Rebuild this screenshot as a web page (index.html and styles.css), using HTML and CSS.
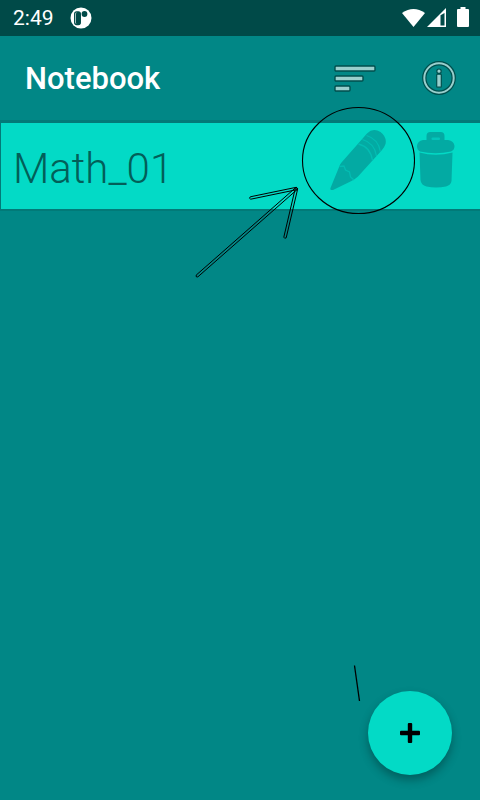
FILE: index.html
```
<!DOCTYPE html>
<html lang="en">
<head>
<meta charset="utf-8">
<meta name="viewport" content="width=device-width, initial-scale=1">
<title>Notebook</title>
<link rel="stylesheet" href="styles.css">
</head>
<body>
<div class="status">
  <span class="clock">2:49</span>
  <svg class="status-app" viewBox="0 0 22 22" width="22" height="22" aria-hidden="true">
    <circle cx="11" cy="11" r="10.500" fill="#fff"/>
    <rect x="4.700" y="4.800" width="5.600" height="12.800" rx="2" fill="#fff" stroke="#004a48" stroke-width="1.300"/>
    <rect x="6" y="5" width="4.300" height="12.500" rx="1.500" fill="#004a48"/>
    <circle cx="14.500" cy="7" r="2.900" fill="#004a48"/>
  </svg>
  <svg class="status-icons" viewBox="0 0 68 22" width="68" height="22" aria-hidden="true">
    <path d="M0 6Q11.500-2 23 6L11.500 20Z" fill="#fff"/>
    <path d="M44 1V20H25Z" fill="#fff"/>
    <path d="M38.500 8.200L42.500 6V18.500H38.500Z" fill="#004a48"/>
    <path d="M58.500 0H63.500V2H66Q67 2 67 3V19Q67 20 66 20H56Q55 20 55 19V3Q55 2 56 2H58.500Z" fill="#fff"/>
  </svg>
</div>
<header class="appbar">
  <h1>Notebook</h1>
  <button class="tool" aria-label="Sort">
    <svg viewBox="0 0 48 48" width="48" height="48" fill="#99cfcd" stroke="#004f4d" stroke-width="1.400">
      <rect x="4" y="12" width="40" height="5" rx="1"/>
      <rect x="4" y="22" width="28" height="5" rx="1"/>
      <rect x="4" y="32" width="15" height="5" rx="1"/>
    </svg>
  </button>
  <button class="tool" aria-label="Information">
    <svg viewBox="0 0 48 48" width="48" height="48" fill="none">
      <circle cx="24" cy="24" r="14.700" stroke="#004f4d" stroke-width="4.400"/>
      <circle cx="24" cy="24" r="14.700" stroke="#99cfcd" stroke-width="2"/>
      <circle cx="24" cy="17.200" r="2.200" fill="#99cfcd" stroke="#004f4d" stroke-width="1.200"/>
      <rect x="21.700" y="20.200" width="4.600" height="13" rx=".8" fill="#99cfcd" stroke="#004f4d" stroke-width="1.200"/>
    </svg>
  </button>
</header>
<main>
  <ul class="notes">
    <li class="note">
      <span class="name">Math_01</span>
      <button class="act edit" aria-label="Edit">
        <svg viewBox="0 0 60 64" width="60" height="64">
          <path d="M3.500 62Q2 62 2.500 60L11.500 38Q12 36 13.500 34.500L39 5.500Q45-.5 52.500 4Q59 9 57.500 16Q56.500 19 54 22L30 48.500Q26 52 23.500 53L5 62Z" fill="#03aaa3"/>
          <path d="M30.500 16Q42.500 19 44.500 32.500M34.500 11.500Q46.500 15 48.500 28M38.500 7.500Q50.500 11 52.500 24M11.500 38.500L16 38L17.500 42L21.500 44L22.500 49L26 52" fill="none" stroke="#03bdb3" stroke-width="1.300"/>
        </svg>
      </button>
      <button class="act trash" aria-label="Delete">
        <svg viewBox="0 0 40 64" width="40" height="64" fill="#03aaa3">
          <path d="M10.500 12V8Q10.500 4 14.500 4H24.500Q28.500 4 28.500 8V12H32Q38 13 38.500 18Q38.500 22 35 23.500Q19.500 27 4 23.500Q1 22 1 18Q1.500 13 7 12Z"/>
          <rect x="15.500" y="9.500" width="8.500" height="2.500" rx="1" fill="#03c5ba"/>
          <path d="M3.500 24.500Q19.500 29 36.500 24.500L35.500 53Q35 57 30 58.500Q20 60.500 10.500 58.500Q5 57 4.500 52Z"/>
        </svg>
      </button>
    </li>
  </ul>
  <svg class="marks" viewBox="0 0 220 175" width="220" height="175" fill="none" stroke="#000" aria-hidden="true">
    <ellipse cx="163.500" cy="54.500" rx="56" ry="53" stroke-width="1.100"/>
    <g stroke-linejoin="round">
      <path d="M1.200 169.100L100.700 81.600Q102.500 81 102.300 83.400L2.800 170.900Q.5 171.500 1.200 169.100Z"/>
      <path d="M55.300 90.800L101.300 81.300Q103 82 101.700 83.700L55.700 93.200Q53.500 92.500 55.300 90.800Z"/>
      <path d="M102.700 82.800L91.200 131.800Q89.500 133 88.800 131.200L100.300 82.200Q101.500 80.500 102.700 82.800Z"/>
    </g>
  </svg>
</main>
<div class="corner">
  <svg class="tick" viewBox="0 0 8 38" width="8" height="38" aria-hidden="true"><path d="M1.500 1.500L6.500 37" stroke="#000" stroke-width="1.300"/></svg>
  <button class="fab" aria-label="Add notebook">
    <svg viewBox="0 0 24 24" width="24" height="24"><rect x="2" y="9.800" width="20" height="4.400" rx="1"/><rect x="9.800" y="2" width="4.400" height="20" rx="1"/></svg>
  </button>
</div>
</body>
</html>
```
FILE: styles.css
```
* { box-sizing: border-box; }
body {
  margin: 0;
  min-height: 100vh;
  display: flex;
  flex-direction: column;
  background: #018786;
  color: #fff;
  font-family: Roboto, "Liberation Sans", sans-serif;
}
button {
  border: 0;
  padding: 0;
  background: none;
  cursor: pointer;
}
svg { display: block; }
.status {
  display: flex;
  align-items: center;
  height: 36px;
  padding: 0 10px 0 13px;
  background: #004a48;
}
.clock { font-size: 21px; }
.status-app { margin-left: 16px; }
.status-icons { margin-left: auto; }
.appbar {
  display: flex;
  align-items: center;
  gap: 36px;
  height: 84px;
  padding: 0 17px 0 25px;
}
h1 {
  flex: 1;
  margin: 0;
  font-size: 31px;
  font-weight: 500;
}
main { position: relative; flex: 1; }
.notes { margin: 0; padding: 0; list-style: none; }
.note {
  display: flex;
  align-items: flex-start;
  height: 91px;
  padding: 5px 24px 0 12px;
  border: solid #027a78;
  border-width: 3px 0 2px 1px;
  background: #03dac6;
}
.name {
  flex: 1;
  align-self: center;
  font-size: 42px;
  font-weight: 300;
  color: #025f59;
}
.act svg { filter: blur(0.6px); }
.edit { margin-right: 28px; }
.marks {
  position: absolute;
  top: -14px;
  right: 65px;
  pointer-events: none;
}
.corner {
  position: fixed;
  right: 28px;
  bottom: 25px;
}
.fab {
  display: grid;
  place-items: center;
  width: 84px;
  height: 84px;
  border-radius: 50%;
  background: #03dac6;
  box-shadow: 0 5px 10px rgba(0, 0, 0, 0.3);
}
.tick { position: absolute; left: -15px; top: -27px; }
```
